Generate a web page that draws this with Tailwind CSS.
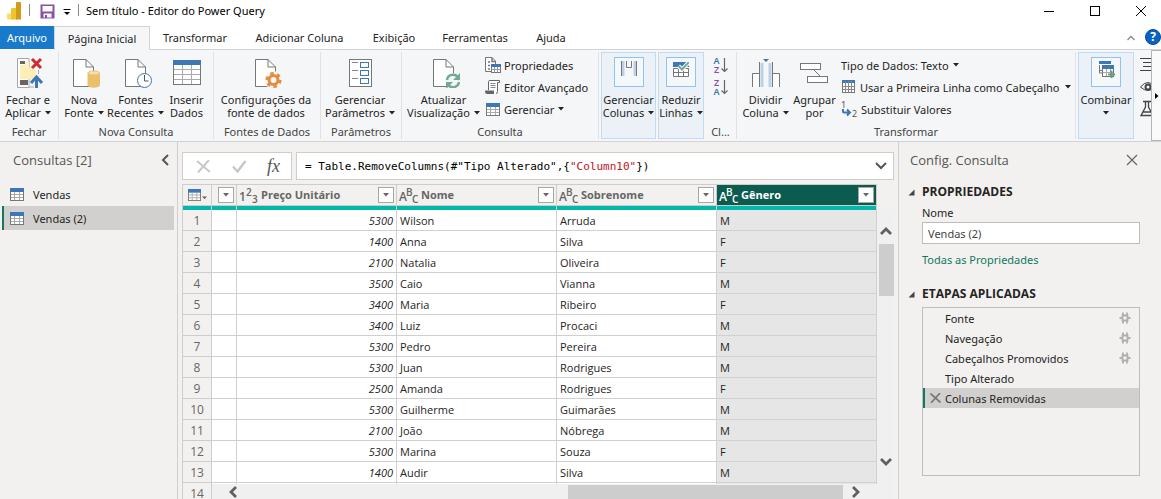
<!DOCTYPE html>
<html lang="pt-BR">
<head>
<meta charset="utf-8">
<title>Sem título - Editor do Power Query</title>
<script src="https://cdn.jsdelivr.net/npm/@tailwindcss/browser@4"></script>
</head>
<body class="h-screen overflow-hidden flex flex-col bg-[#f2f1ef] text-[11px] leading-[13px] text-[#252423] font-['Noto_Sans','Open_Sans',sans-serif]">

<svg class="hidden" aria-hidden="true">
  <symbol id="grid" viewBox="0 0 14 13"><rect x=".5" y=".5" width="13" height="12" fill="#fff" stroke="#777"/><rect width="14" height="4" fill="#3f76b5"/><path d="M1 6.500H13M1 9.500H13M4.500 4V12M9.500 4V12" stroke="#aaa" fill="none"/></symbol>
  <symbol id="down" viewBox="0 0 6 4"><path d="M0 0H6L3 3.500Z" fill="currentColor"/></symbol>
  <symbol id="gear" viewBox="0 0 12 12"><path d="M3.500 3.500H8.500V8.500H3.500ZM4 .5V4M8 .5V4M4 8V11.500M8 8V11.500M.5 6H3M9 6H11.500" stroke="currentColor" stroke-width="1.800" fill="none"/></symbol>
</svg>

<header class="shrink-0">
  <!-- Title bar -->
  <div class="h-[26px] bg-white flex items-center pl-[6px] text-black">
    <svg class="w-[16px] h-[18px] -mt-[5px]" viewBox="0 0 16 18"><path d="M1 12.500a1 1 0 0 1 1-1h5v6H2a1 1 0 0 1-1-1Z" fill="#f8dc6c"/><path d="M5 7a1 1 0 0 1 1-1h5v11.500H5Z" fill="#efc42f"/><path d="M10 1a1 1 0 0 1 1-1h3a1 1 0 0 1 1 1v16.500h-5Z" fill="#d29a1b"/></svg>
    <span class="w-px h-[12px] bg-[#8a8a8a] ml-[7px] -mt-[6px]"></span>
    <button aria-label="Salvar" class="ml-[10px] -mt-[4px]"><svg class="w-[15px] h-[15px] block" viewBox="0 0 15 15"><path d="M.5 .5H14.500V14.500H.5Z" fill="#8950a8"/><rect x="2.500" y="2" width="10" height="5.500" fill="#fff"/><rect x="3.500" y="9.500" width="8" height="4" fill="#fff"/><rect x="5" y="11" width="2" height="3" fill="#8950a8"/></svg></button>
    <button aria-label="Personalizar" class="ml-[8px] -mt-[2px]"><svg class="w-[8px] h-[7px] block" viewBox="0 0 8 7"><path d="M.5 .5H7.500" stroke="#000"/><path d="M1 3H7L4 6Z"/></svg></button>
    <span class="w-px h-[12px] bg-[#8a8a8a] ml-[7px] -mt-[6px]"></span>
    <h1 class="ml-[7px] -mt-[4px] leading-[16px]">Sem título - Editor do Power Query</h1>
    <div class="ml-auto flex items-center gap-[34px] pr-[14px] -mt-[5px]">
      <button aria-label="Minimizar"><svg class="w-[12px] h-[12px] block" viewBox="0 0 12 12"><path d="M1 6.500H11" stroke="#000"/></svg></button>
      <button aria-label="Maximizar"><svg class="w-[12px] h-[12px] block" viewBox="0 0 12 12"><rect x="1.500" y="1.500" width="9" height="9" fill="none" stroke="#000"/></svg></button>
      <button aria-label="Fechar janela"><svg class="w-[12px] h-[12px] block" viewBox="0 0 12 12"><path d="M1 1L11 11M11 1L1 11" stroke="#000"/></svg></button>
    </div>
  </div>

  <!-- Tabs -->
  <nav class="h-[24px] bg-white flex items-stretch">
    <button class="w-[54px] h-[23px] bg-[#1979ca] text-white">Arquivo</button>
    <button class="w-[96px] border border-b-0 border-[#d2d3d5] bg-[#f5f6f7]">Página Inicial</button>
    <div class="flex-1 flex border-b border-[#d2d3d5]">
      <button class="w-[90px]">Transformar</button>
      <button class="w-[119px]">Adicionar Coluna</button>
      <button class="w-[70px]">Exibição</button>
      <button class="w-[92px]">Ferramentas</button>
      <button class="w-[60px]">Ajuda</button>
      <button aria-label="Recolher faixa" class="ml-auto mr-[10px]"><svg class="w-[8px] h-[6px] block" viewBox="0 0 8 6"><path d="M.5 5L4 1.500L7.500 5" stroke="#888" stroke-width="1.300" fill="none"/></svg></button>
      <button aria-label="Ajuda do Power Query" class="w-[16px] h-[16px] mt-[3px] rounded-full bg-[#0a63c2] border border-[#0b4a94] text-white text-[12px] leading-[14px] font-bold">?</button>
    </div>
  </nav>

  <!-- Ribbon -->
  <div class="h-[92px] bg-[#f5f6f7] border-b border-[#d2d3d5] flex overflow-hidden [&_section]:shrink-0 [&_section]:my-[2px] [&_section]:border-r [&_section]:border-[#e1e2e4] [&_section]:flex [&_section]:flex-col [&_h2]:text-center [&_h2]:text-[#444] [&_h2]:leading-[14px] [&_h2]:mt-auto [&_h2]:whitespace-nowrap [&_button]:shrink-0 [&_button]:whitespace-nowrap">
    <section class="w-[59px]">
      <div class="flex">
        <button class="w-[56px] pt-[4px] flex flex-col items-center">
          <svg class="w-[32px] h-[32px] mb-[5px]" viewBox="0 0 32 32"><path d="M5.500 2.500H17V31.500H5.500Z" fill="#fff" stroke="#a8a8a8"/><path d="M8 5H13V8H8ZM8 24H16V29H8Z" fill="#666"/><path d="M8 9H13V6H17V12L24 14V23H8Z" fill="#ffeeb5"/><path d="M17 31H22M26.500 14V18" stroke="#a8a8a8"/><path d="M20 3L29 12M29 3L20 12" stroke="#cf2b30" stroke-width="3"/><path d="M24.500 32V21M19 27L24.500 21L30 27" stroke="#3f76b5" stroke-width="3" fill="none"/></svg>
          <span>Fechar e</span><span class="flex items-center gap-[4px]">Aplicar<svg class="w-[6px] h-[4px]"><use href="#down"/></svg></span>
        </button>
      </div>
      <h2>Fechar</h2>
    </section>

    <section class="w-[155px]">
      <div class="flex">
        <button class="w-[50px] pt-[4px] flex flex-col items-center">
          <svg class="w-[32px] h-[32px] mb-[5px]" viewBox="0 0 32 32"><path d="M5.500 3.500H18L25.500 11V30.500H5.500Z" fill="#fff" stroke="#777"/><path d="M18 3.500V11H25.500" fill="none" stroke="#777"/><path d="M19.500 17V29c0 3.500 12.500 3.500 12.500 0V17Z" fill="#ebc06b"/><ellipse cx="25.700" cy="17" rx="5.800" ry="2" fill="#f6dfad" stroke="#ebc06b"/></svg>
          <span>Nova</span><span class="flex items-center gap-[4px]">Fonte<svg class="w-[6px] h-[4px]"><use href="#down"/></svg></span>
        </button>
        <button class="w-[53px] pt-[4px] flex flex-col items-center">
          <svg class="w-[32px] h-[32px] mb-[5px]" viewBox="0 0 32 32"><path d="M5.500 3.500H18L25.500 11V30.500H5.500Z" fill="#fff" stroke="#777"/><path d="M18 3.500V11H25.500" fill="none" stroke="#777"/><circle cx="24.500" cy="24.500" r="7" fill="#fff" stroke="#3f76b5"/><path d="M24.500 19V25H28.500" fill="none" stroke="#555"/></svg>
          <span>Fontes</span><span class="flex items-center gap-[4px]">Recentes<svg class="w-[6px] h-[4px]"><use href="#down"/></svg></span>
        </button>
        <button class="w-[49px] pt-[4px] flex flex-col items-center">
          <svg class="w-[32px] h-[32px] mb-[5px]" viewBox="0 0 32 32"><rect x="2.500" y="4.500" width="27" height="24" fill="#fff" stroke="#777"/><rect x="2" y="4" width="28" height="5" fill="#3f76b5"/><path d="M3 13.500H29M3 18.500H29M3 23.500H29M11.500 9V28M20.500 9V28" stroke="#aaa"/></svg>
          <span>Inserir</span><span>Dados</span>
        </button>
      </div>
      <h2>Nova Consulta</h2>
    </section>

    <section class="w-[107px]">
      <div class="flex">
        <button class="w-[104px] pt-[4px] flex flex-col items-center">
          <svg class="w-[32px] h-[32px] mb-[5px]" viewBox="0 0 32 32"><path d="M5.500 3.500H18L25.500 11V30.500H5.500Z" fill="#fff" stroke="#777"/><path d="M18 3.500V11H25.500" fill="none" stroke="#777"/><circle cx="23.500" cy="24" r="9" fill="#f5f6f7"/><circle cx="23.500" cy="24" r="4.500" fill="none" stroke="#e58a3c" stroke-width="3"/><circle cx="23.500" cy="24" r="6.800" fill="none" stroke="#e58a3c" stroke-width="2.500" stroke-dasharray="3.500 3.620"/></svg>
          <span>Configurações da</span><span>fonte de dados</span>
        </button>
      </div>
      <h2>Fontes de Dados</h2>
    </section>

    <section class="w-[81px]">
      <div class="flex">
        <button class="w-[78px] pt-[4px] flex flex-col items-center">
          <svg class="w-[32px] h-[32px] mb-[5px]" viewBox="0 0 32 32"><rect x="5.500" y="3.500" width="22" height="27" fill="#fff" stroke="#777"/><path d="M8 6.500H14M8 14.500H14M8 22.500H14" stroke="#888"/><g fill="none" stroke="#3f76b5"><rect x="16.500" y="6.500" width="8" height="5"/><rect x="16.500" y="14.500" width="8" height="5"/><rect x="16.500" y="22.500" width="8" height="5"/></g></svg>
          <span>Gerenciar</span><span class="flex items-center gap-[4px]">Parâmetros<svg class="w-[6px] h-[4px]"><use href="#down"/></svg></span>
        </button>
      </div>
      <h2>Parâmetros</h2>
    </section>

    <section class="w-[197px]">
      <div class="flex">
        <button class="w-[83px] pt-[4px] flex flex-col items-center">
          <svg class="w-[32px] h-[32px] mb-[5px]" viewBox="0 0 32 32"><path d="M5.500 3.500H18L25.500 11V30.500H5.500Z" fill="#fff" stroke="#777"/><path d="M18 3.500V11H25.500" fill="none" stroke="#777"/><circle cx="25" cy="25" r="8" fill="#f5f6f7"/><path d="M19 24A6 6 0 0 1 30 21.500M31 26A6 6 0 0 1 20 28.500" fill="none" stroke="#72a992" stroke-width="2.500"/><path d="M32 17V24H25ZM18 33V26H25Z" fill="#72a992"/></svg>
          <span>Atualizar</span><span class="flex items-center gap-[4px]">Visualização<svg class="w-[6px] h-[4px]"><use href="#down"/></svg></span>
        </button>
        <div class="pt-[2px] [&_button]:flex [&_button]:items-center [&_button]:h-[22px] [&_button]:gap-[3px]">
          <button><svg class="w-[16px] h-[16px]" viewBox="0 0 16 16"><path d="M.5 .5H7L10.500 4V14.500H.5Z" fill="#fff" stroke="#777"/><path d="M7 .5V4.500H10M3 5H5M3 8.500H5M3 12H5" stroke="#777" fill="none" stroke-width="1.500"/><rect x="6.500" y="7.500" width="9" height="8" fill="#fff" stroke="#777"/><path d="M6 7H16V10H6Z" fill="#3f76b5"/><path d="M7 12.500H15M9.500 10V15M12.500 10V15" stroke="#999"/></svg>Propriedades</button>
          <button><svg class="w-[16px] h-[16px]" viewBox="0 0 16 16"><path d="M3.500 11V2.500Q3.500 1.500 5 1.500H14.500V3.500H12.500V12.500Q12.500 14.500 11 14.500" fill="#fff" stroke="#666"/><path d="M5.500 4.500H10.500M5.500 6.500H10.500M5.500 8.500H10.500" stroke="#888"/><path d="M0 11.500H9V15H2Q0 15 0 11.500Z" fill="#666"/></svg>Editor Avançado</button>
          <button><svg class="w-[14px] h-[13px] mx-px"><use href="#grid"/></svg>Gerenciar<svg class="w-[6px] h-[4px] ml-px"><use href="#down"/></svg></button>
        </div>
      </div>
      <h2>Consulta</h2>
    </section>

    <button class="w-[55px] ml-[2px] my-[2px] border border-[#c0dbf3] bg-[#ebf1f6] pt-[4px] flex flex-col items-center">
      <span class="w-[30px] h-[30px] border border-[#92c3ef] bg-[#f5f8fb] flex justify-center pt-[3px] mb-[6px]"><svg class="w-[16px] h-[16px]" viewBox="0 0 16 16"><path d="M2 0V15M14 0V15" stroke="#bdd1e6" stroke-width="3"/><path d="M.5 0V15M15.500 0V15M5.500 0V6.500H10.500V0" stroke="#777" fill="none"/></svg></span>
      <span>Gerenciar</span><span class="flex items-center gap-[4px]">Colunas<svg class="w-[6px] h-[4px]"><use href="#down"/></svg></span>
    </button>
    <button class="w-[46px] ml-[2px] mr-px my-[2px] border border-[#c0dbf3] bg-[#ebf1f6] pt-[4px] flex flex-col items-center">
      <span class="w-[30px] h-[30px] border border-[#92c3ef] bg-[#f5f8fb] flex justify-center pt-[4px] mb-[6px]"><svg class="w-[16px] h-[16px]" viewBox="0 0 16 16"><rect x="0" y="0" width="16" height="5" fill="#3f76b5"/><path d="M.5 6.500H15.500V14.500H.5ZM.5 10.500H15.500M5.500 6.500V14.500M10.500 6.500V14.500" fill="#fff" stroke="#777"/><path d="M5.500 4L9 7.500L15.500 .5" stroke="#fff" stroke-width="4" fill="none"/><path d="M5.500 4L9 7.500L15.500 .5" stroke="#72a992" stroke-width="2" fill="none"/></svg></span>
      <span>Reduzir</span><span class="flex items-center gap-[4px]">Linhas<svg class="w-[6px] h-[4px]"><use href="#down"/></svg></span>
    </button>

    <section class="w-[32px]">
      <div class="flex flex-col items-center gap-[4px] pt-[4px] [&_button]:flex [&_button]:items-center [&_button]:gap-px [&_button]:text-[9px] [&_button]:leading-[9px] [&_button]:font-semibold [&_button>span]:flex [&_button>span]:flex-col [&_button>span]:items-center">
        <button aria-label="Classificar crescente"><span><b class="font-semibold text-[#3f76b5]">A</b><b class="font-semibold text-[#8950a8]">Z</b></span><svg class="w-[7px] h-[16px]" viewBox="0 0 7 16"><path d="M3.500 1V15M.5 11.500L3.500 14.500L6.500 11.500" stroke="#666" stroke-width="1.200" fill="none"/></svg></button>
        <button aria-label="Classificar decrescente"><span><b class="font-semibold text-[#8950a8]">Z</b><b class="font-semibold text-[#3f76b5]">A</b></span><svg class="w-[7px] h-[16px]" viewBox="0 0 7 16"><path d="M3.500 1V15M.5 11.500L3.500 14.500L6.500 11.500" stroke="#666" stroke-width="1.200" fill="none"/></svg></button>
      </div>
      <h2>Cl...</h2>
    </section>

    <section class="w-[339px]">
      <div class="flex">
        <button class="w-[57px] pt-[4px] flex flex-col items-center">
          <svg class="w-[32px] h-[32px] mb-[5px]" viewBox="0 0 32 32"><path d="M3 18H9V31H3ZM23 18H29V31H23Z" fill="#fff"/><path d="M2.500 31V17.500H9M29.500 31V17.500H23" fill="none" stroke="#777"/><path d="M12 7V31M20 7V31" stroke="#bdd1e6" stroke-width="3"/><path d="M9.500 6V31M22.500 6V31" stroke="#777"/><path d="M13 3H19L16 6Z" fill="#3f76b5"/></svg>
          <span>Dividir</span><span class="flex items-center gap-[4px]">Coluna<svg class="w-[6px] h-[4px]"><use href="#down"/></svg></span>
        </button>
        <button class="w-[41px] pt-[4px] flex flex-col items-center">
          <svg class="w-[32px] h-[32px] mb-[5px]" viewBox="0 0 32 32"><rect x="1.500" y="7.500" width="20" height="6" fill="#fff" stroke="#777"/><rect x="8.500" y="20.500" width="20" height="6" fill="#fff" stroke="#777"/><path d="M15 14L21 20" stroke="#777"/></svg>
          <span>Agrupar</span><span>por</span>
        </button>
        <div class="pt-[2px] pl-[6px] [&_button]:flex [&_button]:items-center [&_button]:h-[22px] [&_button]:gap-[4px]">
          <button>Tipo de Dados: Texto<svg class="w-[6px] h-[4px]"><use href="#down"/></svg></button>
          <button><svg class="w-[15px] h-[14px]" viewBox="0 0 15 14"><rect x="1.500" y=".5" width="12" height="12" fill="#fff" stroke="#777"/><path d="M1 0H14V3H1Z" fill="#3f76b5"/><path d="M4.500 1V12M7.500 1V12M10.500 1V12M2 6.500H13M2 9.500H13" stroke="#888"/></svg>Usar a Primeira Linha como Cabeçalho<svg class="w-[6px] h-[4px] ml-[2px]"><use href="#down"/></svg></button>
          <button><svg class="w-[16px] h-[16px] overflow-visible" viewBox="0 0 16 16"><g font-size="9" fill="#555"><text x="0" y="7">1</text><text x="11" y="16">2</text></g><path d="M2 8V10.500Q2 11.500 4 11.500H8M6 8.500L9 11.500L6 14.500" stroke="#3f76b5" stroke-width="2" fill="none"/></svg>Substituir Valores</button>
        </div>
      </div>
      <h2>Transformar</h2>
    </section>

    <button class="w-[56px] ml-[2px] my-[2px] border border-[#c0dbf3] bg-[#ebf1f6] pt-[4px] flex flex-col items-center">
      <span class="w-[30px] h-[30px] border border-[#92c3ef] bg-[#f5f8fb] flex justify-center pt-[3px] mb-[6px]"><svg class="w-[17px] h-[17px]" viewBox="0 0 17 17"><path d="M1.500 4V12H5M1 9.500H4" stroke="#777" fill="none"/><path d="M1 0H13V3H1Z" fill="#3f76b5"/><rect x="4.500" y="6.500" width="11" height="9" fill="#fff" stroke="#777"/><path d="M4 4H16V8H4Z" fill="#3f76b5"/><path d="M5 11.500H15M8.500 8V15M12.500 8V15" stroke="#aaa"/><path d="M13.500 9.500V17M10 13.500H17" stroke="#5f9f84" stroke-width="2"/></svg></span>
      <span>Combinar</span><svg class="w-[6px] h-[4px] mt-[5px]"><use href="#down"/></svg>
    </button>
    <div class="flex-1 min-w-0 overflow-hidden pl-[6px] pt-[7px] flex flex-col gap-[8px] items-start text-[#444]">
      <svg class="w-[16px] h-[15px] shrink-0" viewBox="0 0 16 15"><path d="M0 1.500H16M3 5.500H16M3 9.500H16M0 13.500H16" stroke="currentColor"/></svg>
      <svg class="w-[16px] h-[12px] shrink-0" viewBox="0 0 16 12"><path d="M.5 7Q8 -2 15.500 7Q8 14 .5 7Z" fill="none" stroke="currentColor"/><circle cx="8" cy="7" r="2.500" fill="none" stroke="currentColor" stroke-width="2"/></svg>
      <svg class="w-[14px] h-[17px] shrink-0" viewBox="0 0 14 17"><path d="M3 1.500H11M5.500 2V7L1 15.500H13L8.500 7V2M3 12H11" fill="none" stroke="currentColor" stroke-width="1.300"/></svg>
    </div>
    <button aria-label="Rolar faixa" class="w-[10px] bg-[#fafafa] border border-r-0 border-[#b5b5b5] flex items-center justify-center"><svg class="w-[4px] h-[6px]" viewBox="0 0 4 6"><path d="M0 0V6L3.500 3Z"/></svg></button>
  </div>
</header>

<main class="flex-1 min-h-0 flex">
  <!-- Queries -->
  <aside class="w-[178px] shrink-0 border-r border-[#d0cfcd]">
    <div class="flex items-center justify-between pl-[13px] pr-[8px] pt-[8px] h-[28px]">
      <h2 class="text-[13px] leading-[20px] text-[#555] font-['Open_Sans',sans-serif]">Consultas [2]</h2>
      <button aria-label="Recolher painel"><svg class="w-[8px] h-[12px] block" viewBox="0 0 8 12"><path d="M7 1L2 6L7 11" stroke="#555" stroke-width="2" fill="none"/></svg></button>
    </div>
    <ul class="mt-[13px] mr-[3px] ml-[2px]">
      <li><button class="w-full h-[23px] flex items-center gap-[9px] pl-[8px] text-left"><svg class="w-[14px] h-[13px]"><use href="#grid"/></svg>Vendas</button></li>
      <li><button class="w-full h-[24px] flex items-center gap-[9px] pl-[6px] border-l-2 border-[#117865] bg-[#d2d0ce] text-left"><svg class="w-[14px] h-[13px]"><use href="#grid"/></svg>Vendas (2)</button></li>
    </ul>
  </aside>

  <section class="flex-1 min-w-0 flex flex-col px-[4px] pt-[10px]">
    <!-- Formula bar -->
    <div class="flex h-[28px] gap-[4px] shrink-0">
      <div class="w-[110px] bg-white border border-[#cfcdcb] flex items-center justify-between pl-[13px] pr-[11px]">
        <button aria-label="Cancelar"><svg class="w-[15px] h-[13px] block" viewBox="0 0 15 13"><path d="M1 1L14 12M13 0L2 12.500" stroke="#c8c8c8" stroke-width="2"/></svg></button>
        <button aria-label="Confirmar"><svg class="w-[15px] h-[13px] block" viewBox="0 0 15 13"><path d="M1 6.500L5.500 11.500L13.500 1" stroke="#c8c8c8" stroke-width="2.500" fill="none"/></svg></button>
        <button aria-label="Inserir etapa" class="text-[18px] leading-[20px] italic text-[#555] font-['Liberation_Serif',serif]">fx</button>
      </div>
      <div class="flex-1 bg-white border border-[#cfcdcb] flex items-center justify-between pl-[8px] pr-[6px]">
        <div role="textbox" aria-label="Fórmula" class="whitespace-pre text-black text-[11px] font-['DejaVu_Sans_Mono',monospace]">= Table.RemoveColumns(#"Tipo Alterado",{<span class="text-[#c0141c]">"Column10"</span>})</div>
        <button aria-label="Expandir fórmula"><svg class="w-[12px] h-[8px] block" viewBox="0 0 12 8"><path d="M1 1L6 6L11 1" stroke="#555" stroke-width="2" fill="none"/></svg></button>
      </div>
    </div>

    <!-- Data grid -->
    <div class="relative flex-1 min-h-0 mt-[4px] flex overflow-hidden">
      <div class="flex-1 min-w-0">
        <table class="w-full table-fixed border-separate border-spacing-0 border-l border-t border-[#cfcdcb] leading-[16px] text-[11px] font-['Open_Sans',sans-serif] [&_td]:h-[21px] [&_td]:p-0 [&_td]:px-[3px] [&_td]:border-r [&_td]:border-b [&_td]:border-[#d0d0d0] [&_td]:bg-white [&_td:nth-child(3)]:text-right [&_td:nth-child(3)]:italic [&_td:nth-child(6)]:bg-[#e6e6e6] [&_th]:p-0 [&_th]:border-r [&_th]:border-[#cfcdcb] [&_thead_th]:h-[21px] [&_thead_th]:border-b [&_tbody_th]:border-b [&_tbody_th]:font-normal [&_tbody_th]:text-[12px] [&_tbody_th]:text-[#666] [&_tbody_td]:pt-px [&_tbody_th]:pt-px [&_thead_button]:w-[16px] [&_thead_button]:h-[16px] [&_thead_button]:bg-white [&_thead_button]:border [&_thead_button]:border-[#a6a6a6] [&_thead_button]:flex [&_thead_button]:items-center [&_thead_button]:justify-center [&_thead_button]:text-[#666] [&_thead_button]:shrink-0">
          <colgroup><col class="w-[29px]"><col class="w-[25px]"><col><col><col><col></colgroup>
          <thead class="text-[#666] [&_i]:not-italic [&_i]:font-semibold [&_i]:text-[10px] [&_i]:leading-[10px] [&_i]:w-[6px] [&_i:first-child]:text-[12px] [&_i:first-child]:w-[7px] [&_i:first-child]:mt-[4px] [&_i:nth-child(2)]:-mt-[7px] [&_i:nth-child(3)]:mt-[8px] [&_i]:text-left">
            <tr>
              <th><div class="flex items-center pl-[5px] gap-px"><svg class="w-[13px] h-[12px]" viewBox="0 0 14 13"><use href="#grid"/></svg><svg class="w-[5px] h-[4px] mt-[6px]" viewBox="0 0 6 4"><use href="#down"/></svg></div></th>
              <th><div class="flex justify-end pr-[2px]"><button aria-label="Filtrar"><svg class="w-[6px] h-[4px]"><use href="#down"/></svg></button></div></th>
              <th><div class="flex items-center h-[19px] px-[2px]"><span class="flex items-center w-[20px]" aria-hidden="true"><i>1</i><i>2</i><i>3</i></span><span class="flex-1 text-left ml-[2px]">Preço Unitário</span><button aria-label="Filtrar Preço Unitário"><svg class="w-[6px] h-[4px]"><use href="#down"/></svg></button></div></th>
              <th><div class="flex items-center h-[19px] px-[2px]"><span class="flex items-center w-[20px]" aria-hidden="true"><i>A</i><i>B</i><i>C</i></span><span class="flex-1 text-left ml-[2px]">Nome</span><button aria-label="Filtrar Nome"><svg class="w-[6px] h-[4px]"><use href="#down"/></svg></button></div></th>
              <th><div class="flex items-center h-[19px] px-[2px]"><span class="flex items-center w-[20px]" aria-hidden="true"><i>A</i><i>B</i><i>C</i></span><span class="flex-1 text-left ml-[2px]">Sobrenome</span><button aria-label="Filtrar Sobrenome"><svg class="w-[6px] h-[4px]"><use href="#down"/></svg></button></div></th>
              <th class="bg-[#0b5c4e] text-white"><div class="flex items-center h-[19px] px-[2px]"><span class="flex items-center w-[20px]" aria-hidden="true"><i>A</i><i>B</i><i>C</i></span><span class="flex-1 text-left ml-[2px]">Gênero</span><button aria-label="Filtrar Gênero"><svg class="w-[6px] h-[4px]"><use href="#down"/></svg></button></div></th>
            </tr>
            <tr class="[&_td]:h-[4px]! [&_td]:bg-[#01b8aa]! [&_td]:border-b-0! leading-[0px]">
              <td class="bg-[#f2f1ef]! border-b!"></td><td></td><td></td><td></td><td></td><td></td>
            </tr>
          </thead>
          <tbody id="rows"></tbody>
        </table>
      </div>
      <!-- Vertical scroll bar -->
      <div class="w-[17px] mt-[26px] bg-[#f0f0f0] pl-px flex flex-col items-center">
        <svg class="w-[12px] h-[8px] mt-[17px] shrink-0" viewBox="0 0 12 8"><path d="M1 7L6 2L11 7" stroke="#606060" stroke-width="2.800" fill="none"/></svg>
        <span class="w-[15px] h-[52px] mt-[9px] bg-[#cdcdcd]"></span>
        <svg class="w-[12px] h-[8px] mt-auto mb-[33px] shrink-0" viewBox="0 0 12 8"><path d="M1 1L6 6L11 1" stroke="#606060" stroke-width="2.800" fill="none"/></svg>
      </div>
      <!-- Horizontal scroll bar -->
      <div class="absolute left-[30px] right-0 bottom-0 h-[15px] bg-[#f0f0f0] flex items-center pl-[17px] pr-[34px]">
        <svg class="w-[8px] h-[12px] shrink-0" viewBox="0 0 8 12"><path d="M7 1L2 6L7 11" stroke="#606060" stroke-width="2.800" fill="none"/></svg>
        <span class="w-[275px] h-[14px] mt-px ml-auto mr-[9px] bg-[#cdcdcd]"></span>
        <svg class="w-[8px] h-[12px] shrink-0" viewBox="0 0 8 12"><path d="M1 1L6 6L1 11" stroke="#606060" stroke-width="2.800" fill="none"/></svg>
      </div>
    </div>
  </section>

  <!-- Query settings -->
  <aside class="w-[263px] shrink-0 border-l border-[#d0cfcd] pl-[9px] pr-[21px]">
    <div class="flex items-center justify-between pl-[2px] pt-[8px] h-[28px]">
      <h2 class="text-[13px] leading-[20px] text-[#555] font-['Open_Sans',sans-serif]">Config. Consulta</h2>
      <button aria-label="Fechar painel" class="mr-[2px]"><svg class="w-[12px] h-[12px] block" viewBox="0 0 12 12"><path d="M1 1L11 11M11 1L1 11" stroke="#666" stroke-width="1.200"/></svg></button>
    </div>
    <h3 class="mt-[14px] flex items-center gap-[7px] font-bold text-[12px] leading-[16px] font-['Open_Sans',sans-serif]"><svg class="w-[7px] h-[7px]" viewBox="0 0 7 7"><path d="M6.500 .5V6.500H.5Z" fill="#444"/></svg>PROPRIEDADES</h3>
    <div class="pl-[14px]">
      <label for="nome" class="block mt-[4px] leading-[17px]">Nome</label>
      <input id="nome" value="Vendas (2)" class="block mt-px w-full h-[22px] bg-white border border-[#bfbdbb] px-[5px] text-[#444]">
      <a href="#" class="block mt-[8px] leading-[16px] text-[#117865]">Todas as Propriedades</a>
    </div>
    <h3 class="mt-[18px] flex items-center gap-[7px] font-bold text-[12px] leading-[16px] font-['Open_Sans',sans-serif]"><svg class="w-[7px] h-[7px]" viewBox="0 0 7 7"><path d="M6.500 .5V6.500H.5Z" fill="#444"/></svg>ETAPAS APLICADAS</h3>
    <ul class="ml-[14px] mt-[5px] h-[169px] border border-[#bfbdbb] [&_li]:h-[20px] [&_li]:flex [&_li]:items-center [&_li]:justify-between [&_li]:pl-[22px] [&_li]:pr-[8px] [&_svg]:text-[#b0b0b0]">
      <li>Fonte<button aria-label="Configurar Fonte"><svg class="w-[12px] h-[12px] block"><use href="#gear"/></svg></button></li>
      <li>Navegação<button aria-label="Configurar Navegação"><svg class="w-[12px] h-[12px] block"><use href="#gear"/></svg></button></li>
      <li>Cabeçalhos Promovidos<button aria-label="Configurar Cabeçalhos Promovidos"><svg class="w-[12px] h-[12px] block"><use href="#gear"/></svg></button></li>
      <li>Tipo Alterado</li>
      <li class="bg-[#d2d0ce] border-l-2 border-[#117865] pl-[5px]! justify-start! gap-[4px]"><button aria-label="Excluir etapa"><svg class="w-[11px] h-[10px] block" viewBox="0 0 11 10"><path d="M.5 .5L10.500 9.500M10 0L1 10" stroke="#777" stroke-width="1.700"/></svg></button>Colunas Removidas</li>
    </ul>
  </aside>
</main>

<script>
  const people = [
    [5300, "Wilson", "Arruda", "M"], [1400, "Anna", "Silva", "F"], [2100, "Natalia", "Oliveira", "F"],
    [3500, "Caio", "Vianna", "M"], [3400, "Maria", "Ribeiro", "F"], [3400, "Luiz", "Procaci", "M"],
    [5300, "Pedro", "Pereira", "M"], [5300, "Juan", "Rodrigues", "M"], [2500, "Amanda", "Rodrigues", "F"],
    [5300, "Guilherme", "Guimarães", "M"], [2100, "João", "Nóbrega", "M"], [5300, "Marina", "Souza", "F"],
    [1400, "Audir", "Silva", "M"], ["", "", "", ""]
  ];
  document.getElementById("rows").innerHTML = people.map((p, i) =>
    `<tr><th scope="row">${i + 1}</th><td></td>${p.map(v => `<td>${v}</td>`).join("")}</tr>`).join("");
</script>
</body>
</html>
